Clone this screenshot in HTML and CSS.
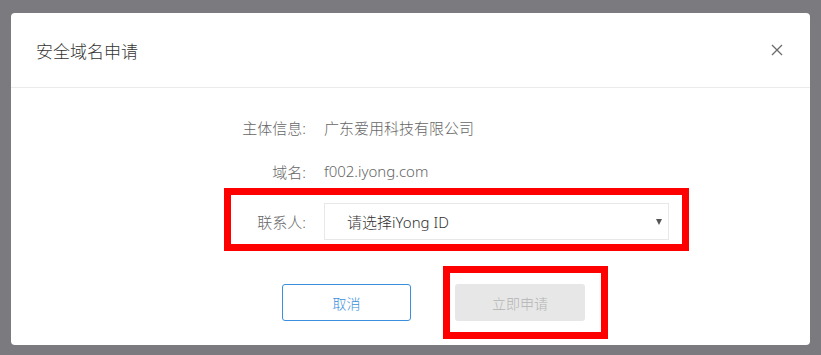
FILE: index.html
```html
<!DOCTYPE html>
<html lang="zh-CN">
<head>
  <meta charset="UTF-8">
  <meta name="viewport" content="width=device-width, initial-scale=1.0">
  <title>安全域名申请</title>
  <link rel="stylesheet" href="styles.css">
</head>
<body>
  <div class="modal">
    <div class="modal-header">
      <span class="modal-title">安全域名申请</span>
      <button class="close" aria-label="关闭">
        <svg width="12" height="12" viewBox="0 0 12 12">
          <path d="M1 1 L11 11 M11 1 L1 11" stroke="#6b6b6b" stroke-width="1.3" fill="none"/>
        </svg>
      </button>
    </div>

    <div class="modal-body">
      <div class="row">
        <span class="label">主体信息:</span>
        <span class="value">广东爱用科技有限公司</span>
      </div>
      <div class="row row-second">
        <span class="label">域名:</span>
        <span class="value">f002.iyong.com</span>
      </div>
      <div class="row row-contact mark">
        <span class="label">联系人:</span>
        <div class="select">
          <span class="placeholder">请选择iYong ID</span>
          <span class="arrow"></span>
        </div>
      </div>

      <div class="footer">
        <button class="btn btn-cancel">取消</button>
        <div class="submit-wrap mark">
          <button class="btn btn-submit" disabled>立即申请</button>
        </div>
      </div>
    </div>
  </div>
</body>
</html>
```

FILE: styles.css
```css
body {
  margin: 0;
  padding: 13px 11px 10px 11px;
  background: #7b7a7f;
  font-family: "Noto Sans", "Noto Sans CJK SC", sans-serif;
  font-weight: 300;
  height: 355px;
  box-sizing: border-box;
}
.modal {
  width: 799px;
  height: 332px;
  background: #fff;
  border-radius: 4px;
  overflow: hidden;
}
.modal-header {
  height: 74px;
  border-bottom: 1px solid #ebebeb;
  display: flex;
  align-items: center;
  justify-content: space-between;
  padding: 0 27px 0 25px;
}
.modal-title {
  font-size: 17px;
  color: #333;
}
.close {
  border: none;
  background: none;
  padding: 0;
  width: 12px;
  height: 12px;
  display: flex;
}
.modal-body {
  padding-top: 29px;
}
.row {
  display: flex;
  align-items: center;
  width: 465px;
  margin-left: 213px;
  box-sizing: border-box;
  padding-left: 7px;
  height: 20px;
  font-size: 15px;
  color: #666;
}
.row-second {
  margin-top: 24px;
}
.label {
  width: 75px;
  text-align: right;
  margin-right: 18px;
  flex: none;
}
.mark {
  border: 7px solid #ff0000;
}
.row-contact {
  margin-top: 7px;
  height: auto;
  padding: 8px 13px 4px 0;
}
.select {
  width: 345px;
  height: 37px;
  box-sizing: border-box;
  border: 1px solid #e8e8e8;
  display: flex;
  align-items: center;
  justify-content: space-between;
  padding: 0 6px 0 22px;
  color: #333;
}
.arrow {
  width: 0;
  height: 0;
  border-left: 3.5px solid transparent;
  border-right: 3.5px solid transparent;
  border-top: 6px solid #555;
}
.footer {
  display: flex;
  align-items: center;
  margin-top: 15px;
  margin-left: 271px;
}
.btn {
  width: 129px;
  height: 37px;
  border-radius: 3px;
  font-family: inherit;
  font-weight: 300;
  font-size: 14px;
  padding: 0;
}
.btn-cancel {
  background: #fff;
  border: 1px solid #3b8fdc;
  color: #3b8fdc;
}
.submit-wrap {
  margin-left: 32px;
  padding: 11px 16px 11px 5px;
  display: flex;
}
.btn-submit {
  width: 130px;
  border: none;
  background: #e7e7e7;
  color: #b3b3b3;
}
```
